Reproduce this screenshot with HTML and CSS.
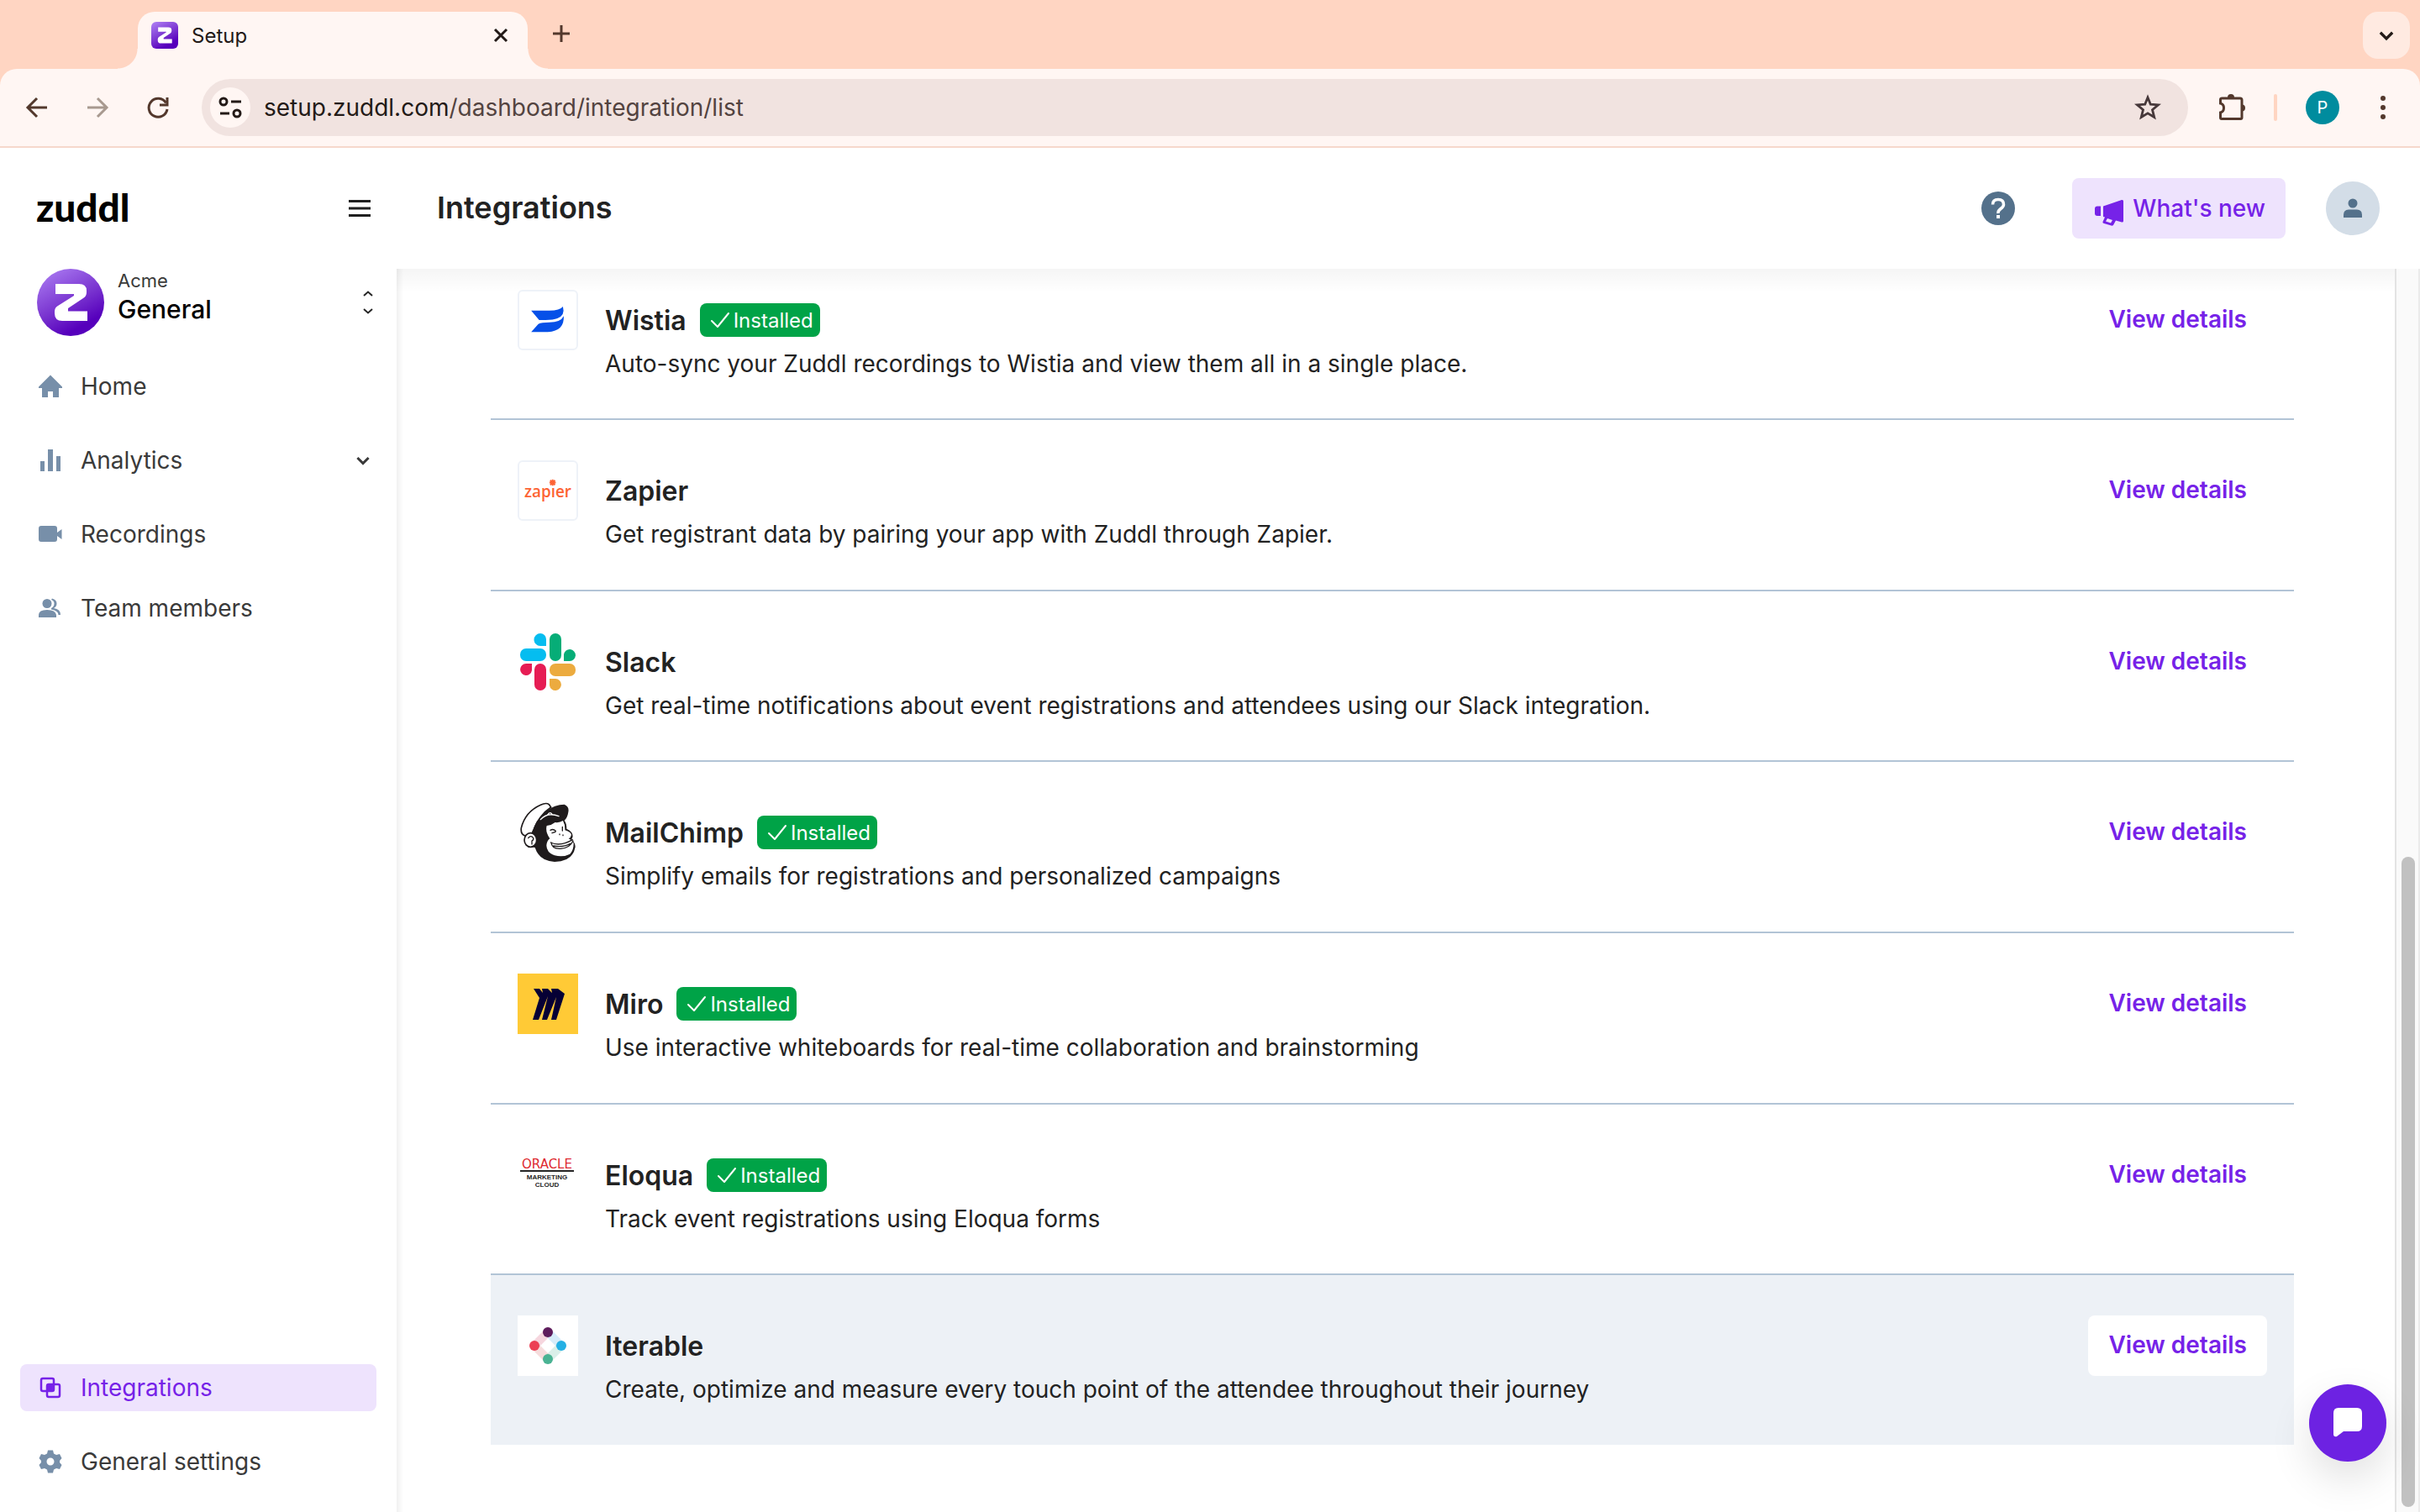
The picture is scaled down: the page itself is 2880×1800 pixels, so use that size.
FILE: index.html
```html
<!DOCTYPE html>
<html lang="en">
<head>
<meta charset="utf-8">
<title>Setup</title>
<link rel="stylesheet" href="styles.css">
</head>
<body>
<svg class="defs" aria-hidden="true">
  <defs>
    <linearGradient id="brand" x1="0.2" y1="0" x2="0.75" y2="1">
      <stop offset="0" stop-color="#a878f0"/>
      <stop offset="0.5" stop-color="#7a35d0"/>
      <stop offset="0.85" stop-color="#5600bc"/>
      <stop offset="1" stop-color="#5600bc"/>
    </linearGradient>
    <symbol id="zmark" viewBox="0 0 40 46">
      <path fill="#fff" d="M2 1H30Q39 1 39 9V11Q39 16 35 18L17 30V33.500H40V45H10Q1 45 1 36V34Q1 29 5 27L24 15V13H2Z"/>
    </symbol>
    <symbol id="check" viewBox="0 0 24 24">
      <path d="M2 13L9 20L22 4" fill="none" stroke="#fff" stroke-width="2" stroke-linecap="round" stroke-linejoin="round"/>
    </symbol>
    <symbol id="chevron" viewBox="0 0 20 20">
      <path d="M4.500 7.500L10 13L15.500 7.500" fill="none" stroke="currentColor" stroke-width="2.500"/>
    </symbol>
  </defs>
</svg>

<header class="browser">
  <div class="tabs">
    <div class="tab">
      <svg class="favicon" viewBox="0 0 32 32"><rect width="32" height="32" rx="6" fill="url(#brand)"/><use href="#zmark" x="7" y="6" width="18" height="20"/></svg>
      <span class="tab-title">Setup</span>
      <button class="icon-button" aria-label="Close tab"><svg width="20" height="20" viewBox="0 0 20 20"><path d="M3 3L17 17M17 3L3 17" stroke="#231a17" stroke-width="3"/></svg></button>
    </div>
    <button class="icon-button new-tab" aria-label="New tab"><svg width="24" height="24" viewBox="0 0 24 24"><path d="M12 2V22M2 12H22" stroke="#53382c" stroke-width="3"/></svg></button>
    <button class="icon-button tab-search" aria-label="Search tabs"><svg width="26" height="26"><use href="#chevron"/></svg></button>
  </div>
  <div class="toolbar">
    <nav class="history">
      <button class="icon-button" aria-label="Back"><svg width="32" height="32" viewBox="0 0 32 32"><path d="M28 16H6M16 5L5 16L16 27" fill="none" stroke="#53382c" stroke-width="3"/></svg></button>
      <button class="icon-button" aria-label="Forward"><svg width="32" height="32" viewBox="0 0 32 32"><path d="M4 16H26M16 5L27 16L16 27" fill="none" stroke="#a8998f" stroke-width="3"/></svg></button>
      <button class="icon-button" aria-label="Reload"><svg width="32" height="32" viewBox="0 0 32 32"><path d="M25.500 10.500A11 11 0 1 0 27 18" fill="none" stroke="#53382c" stroke-width="3"/><path d="M27 4V13H18" fill="none" stroke="#53382c" stroke-width="3"/></svg></button>
    </nav>
    <div class="address">
      <button class="icon-button site-info" aria-label="Site information"><svg width="28" height="28" viewBox="0 0 28 28" fill="none" stroke="#231a17" stroke-width="3"><circle cx="6" cy="7" r="4"/><path d="M15 7H27M2 21H13"/><circle cx="22" cy="21" r="4"/></svg></button>
      <a class="url" href="#">setup.zuddl.com<span class="url-path">/dashboard/integration/list</span></a>
      <button class="icon-button" aria-label="Bookmark"><svg width="32" height="32" viewBox="0 0 32 32"><path d="M16 4L19.300 12.200L28.500 12.900L21.500 18.700L23.700 27.500L16 22.800L8.300 27.500L10.500 18.700L3.500 12.900L12.700 12.200Z" fill="none" stroke="#46383a" stroke-width="2.800"/></svg></button>
    </div>
    <button class="icon-button" aria-label="Extensions"><svg width="34" height="38" viewBox="0 0 34 38"><path d="M6.500 8H28Q30 8 30 10V31Q30 32.500 28.500 32.500H6Q4.500 32.500 4.500 31V25Q8.500 24 8.500 19.500T4.500 14V9.500Q4.500 8 6.500 8Z" fill="none" stroke="#53382c" stroke-width="3"/><path d="M13 7A4 4 0 0 1 21 7ZM30 15.500A4 4 0 0 1 30 23.500Z" fill="#53382c"/></svg></button>
    <span class="divider"></span>
    <button class="icon-button profile" aria-label="Profile">P</button>
    <button class="icon-button more" aria-label="Menu"><svg width="8" height="30" viewBox="0 0 8 30" fill="#53382c"><circle cx="4" cy="4" r="3"/><circle cx="4" cy="15" r="3"/><circle cx="4" cy="26" r="3"/></svg></button>
  </div>
</header>

<div class="app">
  <aside class="sidebar">
    <div class="brand">
      <a class="wordmark" href="#">zuddl</a>
      <button class="icon-button" aria-label="Collapse sidebar"><svg width="28" height="22" viewBox="0 0 28 22"><path d="M1 2.500H27M1 11H27M1 19.500H27" stroke="#1f1f1f" stroke-width="3"/></svg></button>
    </div>
    <button class="workspace">
      <svg class="workspace-logo" viewBox="0 0 80 80"><circle cx="40" cy="40" r="40" fill="url(#brand)"/><use href="#zmark" x="20" y="17" width="40" height="46"/></svg>
      <span class="workspace-names"><span class="workspace-org">Acme</span><span class="workspace-name">General</span></span>
      <svg width="12" height="28" viewBox="0 0 12 28" fill="none" stroke="#262626" stroke-width="2"><path d="M1 6L6 1.500L11 6M1 22L6 26.500L11 22"/></svg>
    </button>
    <nav class="menu">
      <a class="menu-item" href="#"><svg class="menu-icon" viewBox="0 0 28 28"><path d="M14 0.500L28 14.500V16H24V27H17V20H11V27H4V16H0V14.500Z"/></svg>Home</a>
      <a class="menu-item" href="#"><svg class="menu-icon" viewBox="0 0 28 28"><path d="M2 15H7V27H2ZM11 1H17V27H11ZM21 9H26V27H21Z"/></svg>Analytics<svg class="menu-arrow" width="24" height="24"><use href="#chevron"/></svg></a>
      <a class="menu-item" href="#"><svg class="menu-icon" viewBox="0 0 28 28"><path d="M3 4H19Q22 4 22 7V12L27.500 8V20L22 16V20Q22 23 19 23H3Q0 23 0 20V7Q0 4 3 4Z"/></svg>Recordings</a>
      <a class="menu-item" href="#"><svg class="menu-icon" viewBox="0 0 28 28"><circle cx="10" cy="8.500" r="5.500"/><path d="M0 25V22Q0 16 10 16T21 22V25ZM16 2.500Q21.500 4 21.500 8.500Q21.500 12 18 14Q26 15 26 22H23.500Q23.500 17 15 15.500V14Q18.500 12 18.500 8.500T15 4Z"/></svg>Team members</a>
      <a class="menu-item menu-item-active" href="#"><svg class="menu-icon" viewBox="0 0 28 28"><rect x="3" y="3" width="15" height="15" rx="2" fill="none" stroke="#7622e8" stroke-width="2.500"/><rect x="10" y="10" width="15" height="15" rx="2" fill="none" stroke="#7622e8" stroke-width="2.500"/><path d="M10 10H18V18H10Z"/></svg>Integrations</a>
      <a class="menu-item" href="#"><svg class="menu-icon" viewBox="0 0 28 28"><path fill-rule="evenodd" d="M11 0.500H17L18 4.500L21 6L25 5L27.500 10L25 13V15L27.500 18L25 23L21 22L18 23.500L17 27.500H11L10 23.500L7 22L3 23L0.500 18L3 15V13L0.500 10L3 5L7 6L10 4.500ZM14 9.500A4.500 4.500 0 1 0 14 18.500A4.500 4.500 0 1 0 14 9.500Z"/></svg>General settings</a>
    </nav>
  </aside>

  <div class="page">
    <header class="page-header">
      <h1>Integrations</h1>
      <button class="icon-button" aria-label="Help"><svg width="40" height="40" viewBox="0 0 40 40"><circle cx="20" cy="20" r="20" fill="#54718b"/><path d="M13.500 15.500Q13.500 9.500 20 9.500T26.500 15.500Q26.500 18 23 20.500T20 26" fill="none" stroke="#fff" stroke-width="3.500"/><rect x="18" y="28" width="4" height="4" fill="#fff"/></svg></button>
      <button class="news"><svg width="36" height="42" viewBox="0 0 36 42"><path fill="#7622e8" d="M4 18.500H8V30H4Q1 30 1 27V21.500Q1 18.500 4 18.500ZM11 18.500L33 11Q35 10.500 35 12.500V36Q35 38 33 37.500L26 35.500L23 41Q22 42 20.500 41.500L12 39Q10 38.500 10.500 37L13 31.500L11 31Z"/><path d="M16 33L22 35L20 38.500L14 36.500Z" fill="#eee3fd"/></svg>What's new</button>
      <button class="icon-button account" aria-label="Account"><svg width="22" height="24" viewBox="0 0 22 24" fill="#54718b"><circle cx="11" cy="6" r="5.500"/><path d="M0 23V20Q0 13.500 6 13.500H16Q22 13.500 22 20V23Z"/></svg></button>
    </header>
    <main class="content">
      <ul class="list">
        <li class="row">
          <svg class="logo logo-framed" viewBox="0 0 72 72"><path fill="#0650e8" d="M15 24H38Q51 24 55 19Q58 30 48 34Q43 36 33 36H25ZM15 51L24 41Q28 39 38 39Q52 39 56 31Q57 50 36 51Z"/></svg>
          <div class="info"><h2>Wistia <span class="badge"><svg width="24" height="24"><use href="#check"/></svg>Installed</span></h2><p>Auto-sync your Zuddl recordings to Wistia and view them all in a single place.</p></div>
          <button class="details">View details</button>
        </li>
        <li class="row">
          <svg class="logo logo-framed" viewBox="0 0 72 72"><text class="zapier-text" x="36" y="44" text-anchor="middle">zapıer</text><g stroke="#fd6334" stroke-width="2"><path d="M42 22V30M38 26H46M39 23L45 29M45 23L39 29"/></g></svg>
          <div class="info"><h2>Zapier</h2><p>Get registrant data by pairing your app with Zuddl through Zapier.</p></div>
          <button class="details">View details</button>
        </li>
        <li class="row">
          <svg class="logo" viewBox="0 0 72 72"><g fill="#05bdf0"><path d="M27 2a7 7 0 0 0 0 15h7v-8a7 7 0 0 0-7-7Z"/><rect x="3" y="20" width="31" height="15" rx="7"/></g><g fill="#06ad77"><rect x="38" y="2" width="14" height="33" rx="7"/><path d="M55 35v-8a7 7 0 1 1 7 8Z"/></g><g fill="#e61d54"><path d="M17 38v8a7 7 0 1 1-7-8Z"/><rect x="20" y="38" width="14" height="32" rx="7"/></g><g fill="#ecab3f"><rect x="38" y="38" width="31" height="15" rx="7"/><path d="M38 56h7a7 7 0 1 1-7 8Z"/></g></svg>
          <div class="info"><h2>Slack</h2><p>Get real-time notifications about event registrations and attendees using our Slack integration.</p></div>
          <button class="details">View details</button>
        </li>
        <li class="row">
          <svg class="logo" viewBox="18 30 216 216">
            <path fill="#fff" stroke="#1f1b1c" stroke-width="5" d="M45 150Q28 145 31 122Q45 65 100 40Q120 30 130 38L137 48Q95 75 70 140Z"/>
            <path fill="#1f1b1c" d="M72 138Q78 95 120 62Q150 38 185 38Q203 45 199 65Q196 85 185 95Q193 105 193 125Q215 135 215 152Q213 160 210 163Q224 175 224 190Q215 242 150 243Q95 240 80 192L66 190Q70 150 72 138Z"/>
            <ellipse cx="64" cy="165" rx="22" ry="25" fill="#fff" stroke="#1f1b1c" stroke-width="5"/>
            <path fill="#fff" d="M122 114Q140 112 152 102Q168 104 180 96Q188 110 187 130Q206 135 210 146Q208 157 200 160Q214 166 218 178Q218 202 205 215Q180 228 150 220Q122 210 121 185Q122 168 133 160Q116 135 122 114Z"/>
            <path fill="none" stroke="#1f1b1c" stroke-width="4" stroke-linecap="round" d="M56 158Q66 146 74 158Q76 165 69 168V180M136 174Q170 190 214 164M138 174Q140 198 172 196Q204 194 216 168M146 186Q180 192 206 178M135 130Q145 124 154 133M141 140L153 136M178 118V132M168 144V146M180 147V149"/>
            <path fill="none" stroke="#fff" stroke-width="4" stroke-linecap="round" d="M100 92Q125 64 165 80M124 76L132 68M142 74L136 68"/>
          </svg>
          <div class="info"><h2>MailChimp <span class="badge"><svg width="24" height="24"><use href="#check"/></svg>Installed</span></h2><p>Simplify emails for registrations and personalized campaigns</p></div>
          <button class="details">View details</button>
        </li>
        <li class="row">
          <svg class="logo" viewBox="0 0 72 72"><rect width="72" height="72" fill="#ffca36"/><path fill="#060035" d="M19 18H26L30 23L29 18H36L41 23L40 18H48L56 24L46 55H40L46 28L35 55H29L36 27L25 55H18L26 29Z"/></svg>
          <div class="info"><h2>Miro <span class="badge"><svg width="24" height="24"><use href="#check"/></svg>Installed</span></h2><p>Use interactive whiteboards for real-time collaboration and brainstorming</p></div>
          <button class="details">View details</button>
        </li>
        <li class="row">
          <svg class="logo" viewBox="0 0 72 72"><text class="oracle-text" x="35" y="28" text-anchor="middle">ORACLE</text><path d="M3 31H67" stroke="#262626" stroke-width="2"/><text class="cloud-text" x="35" y="41" text-anchor="middle">MARKETING</text><text class="cloud-text" x="35" y="50" text-anchor="middle">CLOUD</text></svg>
          <div class="info"><h2>Eloqua <span class="badge"><svg width="24" height="24"><use href="#check"/></svg>Installed</span></h2><p>Track event registrations using Eloqua forms</p></div>
          <button class="details">View details</button>
        </li>
        <li class="row row-hover">
          <svg class="logo" viewBox="0 0 72 72"><rect width="72" height="72" fill="#fff"/><g stroke-width="10" stroke-opacity="0.2"><path d="M36 20L20 36" stroke="#d0305a"/><path d="M20 36L36 52" stroke="#d05050"/><path d="M36 52L52 36" stroke="#47b090"/><path d="M52 36L36 20" stroke="#30a0e0"/></g><circle cx="36" cy="20" r="6" fill="#5e1c5c"/><circle cx="20" cy="36" r="6" fill="#ec3f54"/><circle cx="52" cy="36" r="6" fill="#25b0e4"/><circle cx="36" cy="52" r="6" fill="#4ab393"/></svg>
          <div class="info"><h2>Iterable</h2><p>Create, optimize and measure every touch point of the attendee throughout their journey</p></div>
          <button class="details">View details</button>
        </li>
      </ul>
      <div class="scrollbar"><span class="thumb"></span></div>
    </main>
  </div>
</div>
<button class="chat" aria-label="Open chat"><svg width="34" height="36" viewBox="0 0 34 36"><path fill="#fff" d="M6 0H28Q34 0 34 6V22Q34 28 28 28H12L4 34Q0 35 0 31V6Q0 0 6 0Z"/></svg></button>
</body>
</html>
```
FILE: styles.css
```css
* { box-sizing: border-box; }

body {
  margin: 0;
  height: 100vh;
  display: flex;
  flex-direction: column;
  overflow: hidden;
  background: #fff;
  color: #222;
  font-family: Inter, "Liberation Sans", sans-serif;
  font-size: 28px;
}

h1, h2, p, ul { margin: 0; padding: 0; }
a { color: inherit; text-decoration: none; }
svg { display: block; flex: none; }
.defs { position: absolute; width: 0; height: 0; }

button {
  border: 0;
  padding: 0;
  background: none;
  color: inherit;
  font: inherit;
}

.icon-button {
  display: flex;
  flex: none;
  align-items: center;
  justify-content: center;
}

/* Browser frame */
.browser { flex: none; background: #ffd5c2; }

.tabs {
  display: flex;
  align-items: flex-end;
  height: 82px;
  padding: 0 12px 0 164px;
}

.tab {
  position: relative;
  display: flex;
  align-items: center;
  gap: 16px;
  width: 464px;
  height: 68px;
  padding: 0 22px 12px 16px;
  border-radius: 20px 20px 0 0;
  background: #fff6f3;
}

.tab::before,
.tab::after {
  content: "";
  position: absolute;
  bottom: 0;
  width: 24px;
  height: 24px;
}

.tab::before {
  right: 100%;
  background: radial-gradient(circle at 0 0, transparent 23px, #fff6f3 24px);
}

.tab::after {
  left: 100%;
  background: radial-gradient(circle at 100% 0, transparent 23px, #fff6f3 24px);
}

.favicon { width: 32px; height: 32px; }
.tab-title { flex: 1; font-size: 24px; color: #231a17; }
.new-tab { width: 80px; height: 84px; }

.tab-search {
  width: 56px;
  height: 56px;
  margin: 0 0 12px auto;
  border-radius: 18px;
  background: #ffeae1;
  color: #231a17;
}

.toolbar {
  display: flex;
  align-items: center;
  gap: 34px;
  height: 94px;
  padding: 0 40px 0 28px;
  border-bottom: 2px solid #f6d8cb;
  border-radius: 20px 20px 0 0;
  background: #fff6f3;
}

.history { display: flex; gap: 40px; padding-right: 2px; }

.address {
  display: flex;
  flex: 1;
  align-items: center;
  height: 68px;
  padding: 0 32px 0 10px;
  border-radius: 34px;
  background: #f1e3e0;
}

.site-info {
  width: 48px;
  height: 48px;
  border-radius: 50%;
  background: #fff6f3;
}

.url { flex: 1; padding-left: 16px; color: #231a17; }
.url-path { color: #534340; }
.divider { width: 4px; height: 32px; border-radius: 2px; background: #ffd5c2; }

.profile {
  width: 40px;
  height: 40px;
  border-radius: 50%;
  background: #008c9e;
  color: #fff;
  font-size: 20px;
}

.more { margin-left: 14px; }

/* App frame */
.app { display: flex; flex: 1; min-height: 0; }

.sidebar {
  display: flex;
  flex: none;
  flex-direction: column;
  width: 472px;
}

.brand {
  display: flex;
  align-items: center;
  justify-content: space-between;
  height: 144px;
  padding: 0 30px 0 43px;
}

.wordmark {
  padding-bottom: 4px;
  color: #000;
  font-family: Lato, sans-serif;
  font-size: 46px;
  font-weight: 900;
}

.workspace {
  display: flex;
  align-items: center;
  gap: 16px;
  padding: 0 28px 0 44px;
  text-align: left;
}

.workspace-logo { width: 80px; height: 80px; }

.workspace-names {
  display: flex;
  flex: 1;
  flex-direction: column;
  padding-bottom: 12px;
}

.workspace-org { font-size: 22px; line-height: 28px; color: #3a3a3a; }
.workspace-name { font-size: 30px; line-height: 40px; font-weight: 500; color: #000; }

.menu {
  display: flex;
  flex: 1;
  flex-direction: column;
  gap: 32px;
  padding: 32px 24px;
}

.menu-item {
  display: flex;
  align-items: center;
  gap: 22px;
  height: 56px;
  padding: 0 4px 0 22px;
  border-radius: 8px;
  color: #3a3a3a;
}

.menu-icon { width: 28px; height: 28px; fill: #778fa9; }
.menu-arrow { margin-left: auto; }
.menu-item-active { margin-top: auto; background: #eee3fd; color: #7622e8; }
.menu-item-active .menu-icon { fill: #7622e8; }

.page { display: flex; flex: 1; flex-direction: column; min-width: 0; }

.page-header {
  display: flex;
  flex: none;
  align-items: center;
  gap: 48px;
  height: 144px;
  padding: 0 48px;
}

h1 { flex: 1; padding-bottom: 2px; font-size: 36px; font-weight: 600; }

.news {
  display: flex;
  align-items: center;
  gap: 10px;
  height: 72px;
  margin-left: 20px;
  padding: 0 24px 0 26px;
  border-radius: 8px;
  background: #eee3fd;
  color: #7622e8;
  font-weight: 500;
}

.account { width: 64px; height: 64px; border-radius: 50%; background: #d3dde7; }

.content {
  display: flex;
  flex: 1;
  min-height: 0;
  overflow: hidden;
  background:
    linear-gradient(to right, #0000000f, transparent 8px),
    linear-gradient(to bottom, #0000000a, transparent 28px);
}

.list { flex: 1; padding: 0 120px 80px 112px; list-style: none; }

.row {
  display: flex;
  gap: 32px;
  height: 204px;
  padding: 48px 32px 0;
  border-bottom: 2px solid #b2c4d6;
}

.row:nth-child(3n) { height: 203px; }
.row:first-child { height: 180px; padding-top: 25px; }
.row:last-child { border-bottom: 0; height: 202px; }
.row-hover { background: #edf1f6; }

.logo { width: 72px; height: 72px; }
.logo-framed { border: 2px solid #eef2f8; border-radius: 6px; }
.info { flex: 1; }

h2 {
  display: flex;
  align-items: center;
  gap: 16px;
  height: 72px;
  font-size: 32px;
  font-weight: 600;
}

p { line-height: 32px; }

.badge {
  display: flex;
  align-items: center;
  gap: 4px;
  height: 40px;
  padding: 0 8px 0 12px;
  border-radius: 8px;
  background: #00a347;
  color: #fff;
  font-size: 24px;
  font-weight: 400;
}

.details {
  height: 72px;
  padding: 0 24px 2px;
  border-radius: 8px;
  color: #7622e8;
  font-weight: 600;
}

.row-hover .details { background: #fff; }

.zapier-text { fill: #fd6334; font-family: "Open Sans", sans-serif; font-size: 20px; font-weight: 600; }
.oracle-text { fill: #de2a30; font-family: "DejaVu Sans", sans-serif; font-size: 15px; }
.cloud-text { fill: #262626; font-family: "Liberation Sans", sans-serif; font-size: 8px; font-weight: 700; }

.scrollbar {
  flex: none;
  width: 30px;
  padding: 700px 4px 6px 6px;
  border-right: 2px solid #ebebeb;
  border-left: 2px solid #e3e3e3;
  background: #fafafa;
}

.thumb { display: block; width: 16px; height: 100%; border-radius: 8px; background: #c1c1c1; }

.chat {
  position: fixed;
  right: 40px;
  bottom: 60px;
  display: flex;
  align-items: center;
  justify-content: center;
  width: 92px;
  height: 92px;
  border-radius: 50%;
  background: #6d22e2;
  box-shadow: 0 20px 50px #0000001f;
}
```
